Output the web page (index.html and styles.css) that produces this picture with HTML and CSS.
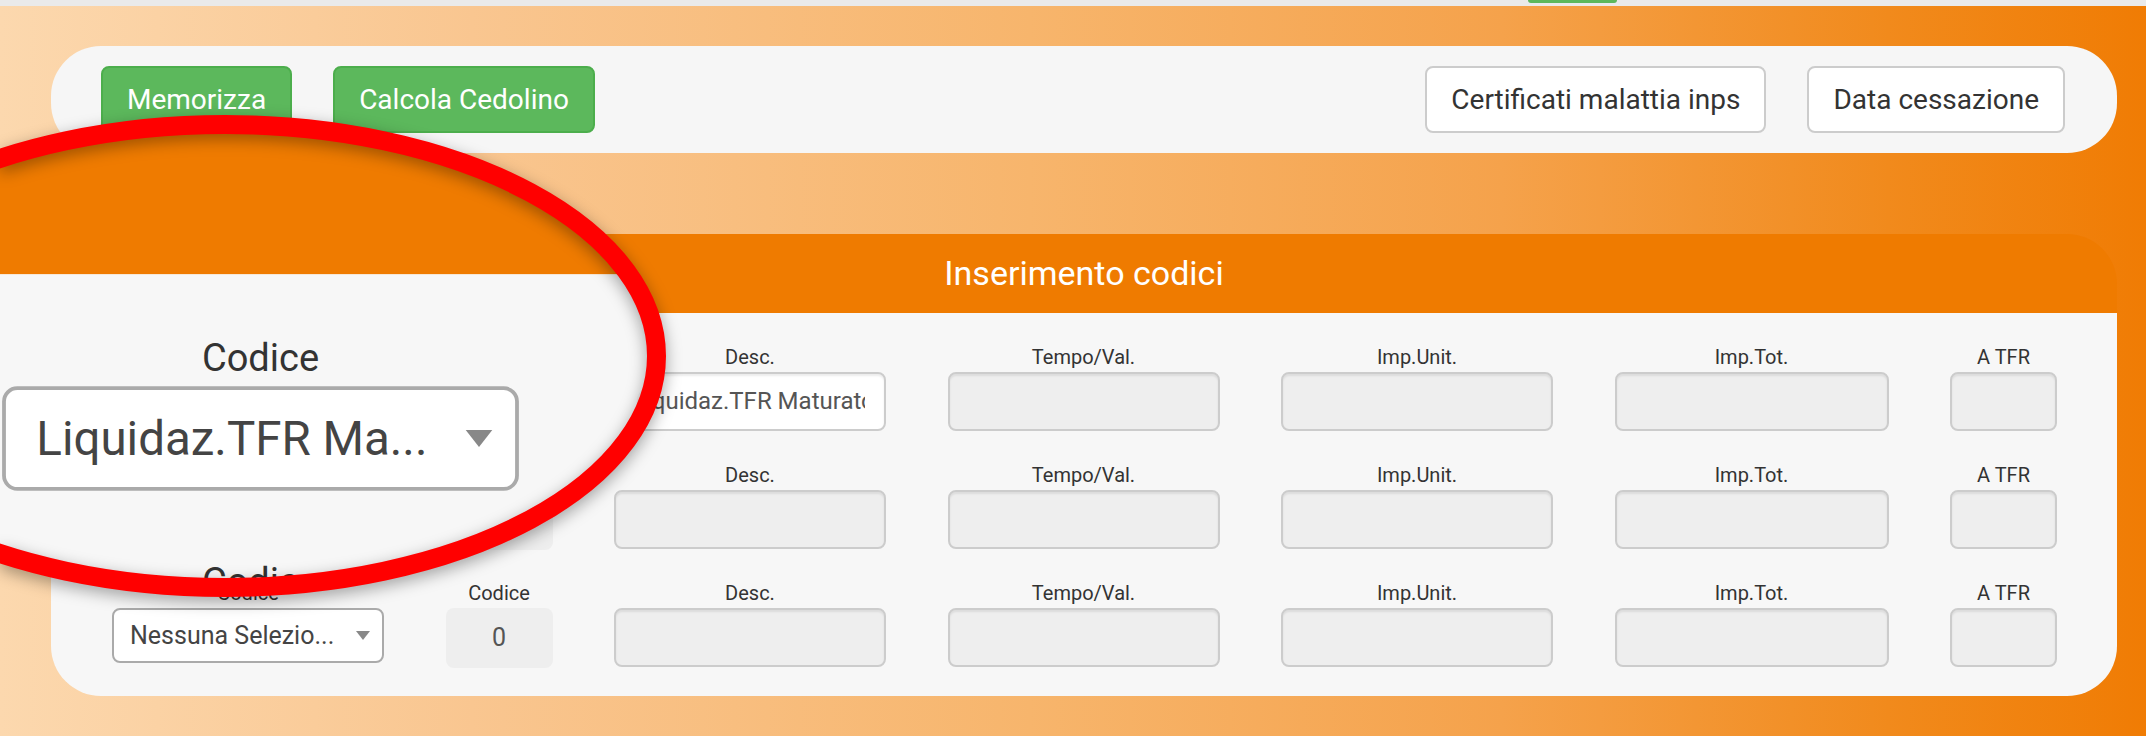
FILE: index.html
```html
<!DOCTYPE html>
<html lang="it">
<head>
<meta charset="utf-8">
<title>Inserimento codici</title>
<link rel="stylesheet" href="styles.css">
</head>
<body>
<div class="topstrip"><span class="peek"></span></div>
<div class="page">
  <div class="toolbar">
    <button class="btn btn-green">Memorizza</button>
    <button class="btn btn-green">Calcola Cedolino</button>
    <span class="spacer"></span>
    <button class="btn btn-white">Certificati malattia inps</button>
    <button class="btn btn-white">Data cessazione</button>
  </div>
  <section class="panel">
    <div class="panel-head">Inserimento codici</div>
    <div class="panel-body">
      <div class="field"><div class="lbl">Codice</div><div class="sel"><span class="sel-text">Liquidaz.TFR Ma...</span><span class="arrow"></span></div></div>
      <div class="field"><div class="lbl">Codice</div><div class="code">0</div></div>
      <div class="field"><div class="lbl">Desc.</div><div class="inp filled"><span class="inp-val">Liquidaz.TFR Maturato</span></div></div>
      <div class="field"><div class="lbl">Tempo/Val.</div><div class="inp"></div></div>
      <div class="field"><div class="lbl">Imp.Unit.</div><div class="inp"></div></div>
      <div class="field"><div class="lbl">Imp.Tot.</div><div class="inp"></div></div>
      <div class="field"><div class="lbl">A TFR</div><div class="inp"></div></div>

      <div class="field"><div class="lbl">Codice</div><div class="sel"><span class="sel-text">Nessuna Selezio...</span><span class="arrow"></span></div></div>
      <div class="field"><div class="lbl">Codice</div><div class="code">0</div></div>
      <div class="field"><div class="lbl">Desc.</div><div class="inp"></div></div>
      <div class="field"><div class="lbl">Tempo/Val.</div><div class="inp"></div></div>
      <div class="field"><div class="lbl">Imp.Unit.</div><div class="inp"></div></div>
      <div class="field"><div class="lbl">Imp.Tot.</div><div class="inp"></div></div>
      <div class="field"><div class="lbl">A TFR</div><div class="inp"></div></div>

      <div class="field"><div class="lbl">Codice</div><div class="sel"><span class="sel-text">Nessuna Selezio...</span><span class="arrow"></span></div></div>
      <div class="field"><div class="lbl">Codice</div><div class="code">0</div></div>
      <div class="field"><div class="lbl">Desc.</div><div class="inp"></div></div>
      <div class="field"><div class="lbl">Tempo/Val.</div><div class="inp"></div></div>
      <div class="field"><div class="lbl">Imp.Unit.</div><div class="inp"></div></div>
      <div class="field"><div class="lbl">Imp.Tot.</div><div class="inp"></div></div>
      <div class="field"><div class="lbl">A TFR</div><div class="inp"></div></div>
    </div>
  </section>
  <div class="panel-next"></div>
</div>

<div class="lens">
  <div class="lens-inner">
    <div class="topstrip"><span class="peek"></span></div>
    <div class="page">
      <div class="toolbar">
        <button class="btn btn-green">Memorizza</button>
        <button class="btn btn-green">Calcola Cedolino</button>
        <span class="spacer"></span>
        <button class="btn btn-white">Certificati malattia inps</button>
        <button class="btn btn-white">Data cessazione</button>
      </div>
      <section class="panel">
        <div class="panel-head">Inserimento codici</div>
        <div class="panel-body">
          <div class="field"><div class="lbl">Codice</div><div class="sel"><span class="sel-text">Liquidaz.TFR Ma...</span><span class="arrow"></span></div></div>
          <div class="field"><div class="lbl">Codice</div><div class="code">0</div></div>
          <div class="field"><div class="lbl">Desc.</div><div class="inp filled"><span class="inp-val">Liquidaz.TFR Maturato</span></div></div>
          <div class="field"><div class="lbl">Tempo/Val.</div><div class="inp"></div></div>
          <div class="field"><div class="lbl">Imp.Unit.</div><div class="inp"></div></div>
          <div class="field"><div class="lbl">Imp.Tot.</div><div class="inp"></div></div>
          <div class="field"><div class="lbl">A TFR</div><div class="inp"></div></div>

          <div class="field"><div class="lbl">Codice</div><div class="sel"><span class="sel-text">Nessuna Selezio...</span><span class="arrow"></span></div></div>
          <div class="field"><div class="lbl">Codice</div><div class="code">0</div></div>
          <div class="field"><div class="lbl">Desc.</div><div class="inp"></div></div>
          <div class="field"><div class="lbl">Tempo/Val.</div><div class="inp"></div></div>
          <div class="field"><div class="lbl">Imp.Unit.</div><div class="inp"></div></div>
          <div class="field"><div class="lbl">Imp.Tot.</div><div class="inp"></div></div>
          <div class="field"><div class="lbl">A TFR</div><div class="inp"></div></div>
        </div>
      </section>
    </div>
  </div>
</div>

<svg class="ring" width="2146" height="736" viewBox="0 0 2146 736" aria-hidden="true">
  <ellipse cx="225" cy="356" rx="431.5" ry="231.5" fill="none" stroke="#ff0000" stroke-width="19"/>
</svg>
</body>
</html>
```

FILE: styles.css
```css
* { box-sizing: border-box; }

html, body {
  margin: 0;
  height: 736px;
  overflow: hidden;
}

body {
  position: relative;
  font-family: Roboto, "Liberation Sans", Arial, sans-serif;
  background: #eaeaea;
}

.topstrip {
  height: 6px;
  background: #eaeaea;
  padding-left: 1528px;
}

.peek {
  display: block;
  width: 89px;
  height: 3px;
  background: #5cb85c;
  border-radius: 0 0 6px 6px;
}

.page {
  height: 730px;
  padding: 40px 29px 0 51px;
  overflow: hidden;
  background: linear-gradient(90deg, #fcd8ae 0%, #f9c690 22%, #f7b56c 48%, #f5a24b 70%, #f18a1c 88%, #f07c04 100%);
}

.toolbar {
  display: flex;
  align-items: center;
  gap: 41px;
  height: 107px;
  padding: 0 52px 0 50px;
  background: #f6f6f6;
  border-radius: 50px;
}

.spacer { flex: 1; }

.btn {
  font-family: inherit;
  font-size: 28px;
  line-height: 40px;
  padding: 11.5px 24px;
  border: 2px solid;
  border-radius: 8px;
  margin: 0;
  cursor: pointer;
}

.btn-green {
  background: #5cb85c;
  border-color: #4cae4c;
  color: #fff;
}

.btn-white {
  background: #fff;
  border-color: #ccc;
  color: #333;
}

.panel { margin-top: 81px; }

.panel-head {
  height: 79px;
  line-height: 79px;
  background: #ef7b00;
  color: #fff;
  text-align: center;
  font-size: 34px;
  border-radius: 50px 50px 0 0;
}

.panel-body {
  display: grid;
  grid-template-columns: 272px 107px 272px 272px 272px 274px 107px;
  column-gap: 61.5px;
  row-gap: 29px;
  padding: 30px 60px 28px 61px;
  background: #f7f7f7;
  border-radius: 0 0 50px 50px;
}

.field {
  display: flex;
  flex-direction: column;
}

.lbl {
  font-size: 20px;
  line-height: 29px;
  color: #333;
  text-align: center;
  white-space: nowrap;
}

.inp {
  height: 59px;
  border: 2px solid #ccc;
  border-radius: 8px;
  background: #eee;
  box-shadow: inset 0 2px 2px rgba(0, 0, 0, 0.075);
  padding: 0 19px 0 17px;
  font-size: 24px;
  line-height: 55px;
  color: #555;
}

.inp.filled { background: #fff; }

.inp-val {
  display: block;
  overflow: hidden;
  white-space: nowrap;
}

.sel {
  height: 55px;
  border: 2px solid #aaa;
  border-radius: 8px;
  background: #fff;
  display: flex;
  align-items: center;
  justify-content: space-between;
  padding: 0 12px 0 16px;
  font-size: 25px;
  color: #444;
  white-space: nowrap;
}

.arrow {
  width: 0;
  height: 0;
  border-left: 7px solid transparent;
  border-right: 7px solid transparent;
  border-top: 9px solid #888;
}

.code {
  height: 60px;
  background: #eee;
  border-radius: 8px;
  text-align: center;
  font-size: 25px;
  line-height: 60px;
  color: #555;
}

.panel-next {
  margin-top: 40px;
  height: 200px;
  background: #f7f7f7;
  border-radius: 50px 50px 0 0;
}

/* magnifier lens */
.lens {
  position: absolute;
  left: -200px;
  top: 131px;
  width: 850px;
  height: 450px;
  border-radius: 50%;
  overflow: hidden;
}

.lens-inner {
  position: absolute;
  left: 0;
  top: 0;
  width: 2146px;
  height: 736px;
  transform-origin: 0 0;
  transform: translate(-10.7px, -451.5px) scale(1.9);
}

.ring {
  position: absolute;
  left: 0;
  top: 0;
  pointer-events: none;
  filter: drop-shadow(0 5px 8px rgba(0, 0, 0, 0.35));
}
```
